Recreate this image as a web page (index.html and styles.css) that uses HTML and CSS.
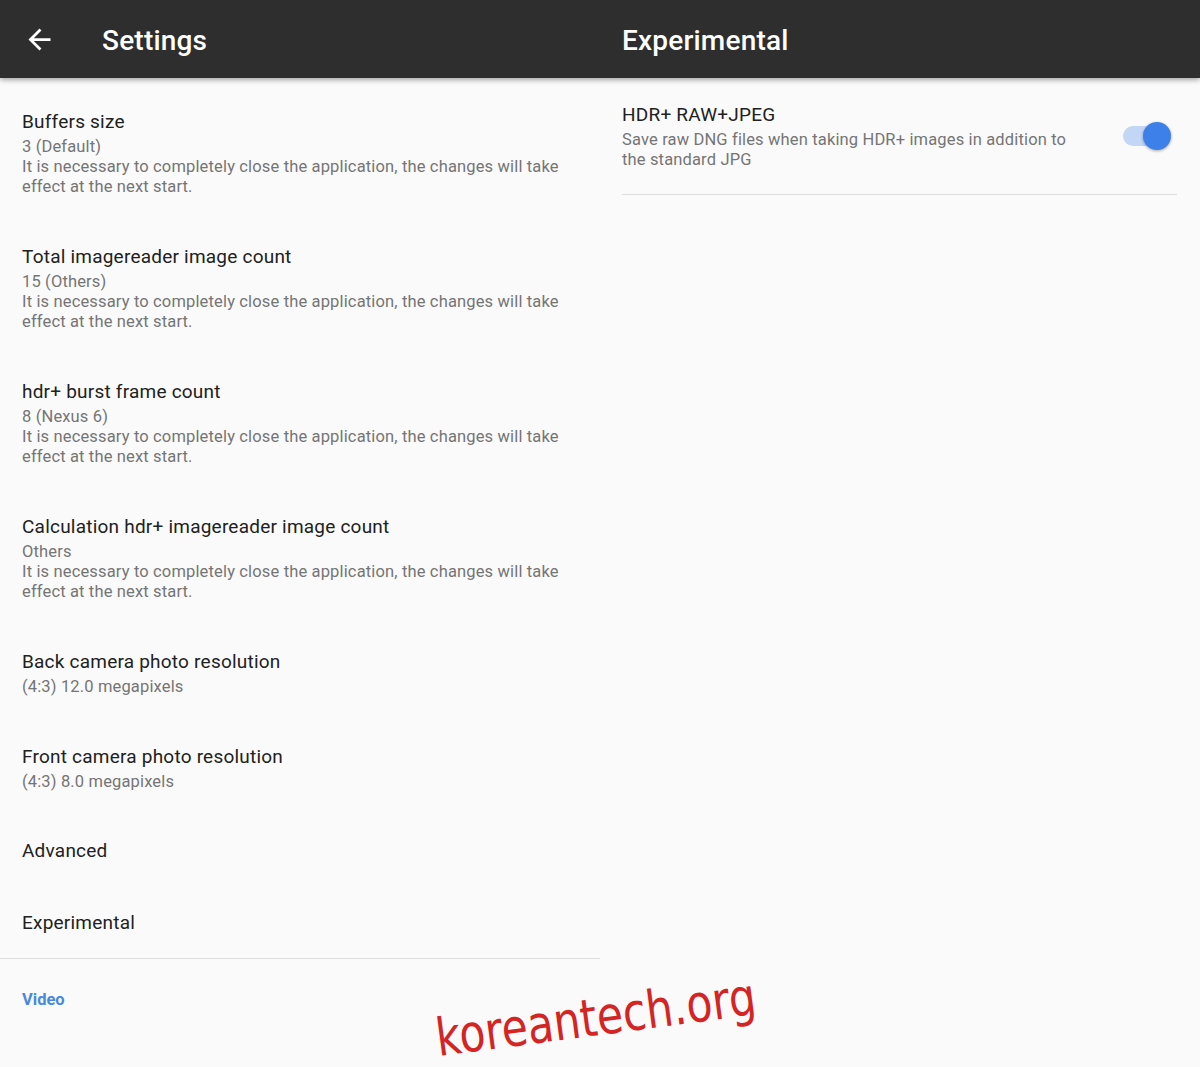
FILE: index.html
```html
<!DOCTYPE html>
<html lang="en">

<head>
    <meta charset="UTF-8">
    <meta name="viewport" content="width=device-width, initial-scale=1.0">
    <title>Settings</title>
    <link rel="stylesheet" href="styles.css">
</head>

<body>
    <!-- Barra superior con los dos títulos -->
    <header class="appbar">
        <div class="appbar-main">
            <span class="back-btn">
                <svg width="33" height="33" viewBox="0 0 24 24">
                    <path d="M20 11H7.83l5.59-5.59L12 4l-8 8 8 8 1.41-1.41L7.83 13H20v-2z" fill="#fff"/>
                </svg>
            </span>
            <h1>Settings</h1>
        </div>
        <div class="appbar-detail">
            <h1>Experimental</h1>
        </div>
    </header>

    <main class="panes">
        <!-- Lista de ajustes -->
        <section class="pane pane-main">
            <div class="pref">
                <div class="pref-title">Buffers size</div>
                <div class="pref-summary">3 (Default)<br>It is necessary to completely close the application, the changes will take effect at the next start.</div>
            </div>
            <div class="pref">
                <div class="pref-title">Total imagereader image count</div>
                <div class="pref-summary">15 (Others)<br>It is necessary to completely close the application, the changes will take effect at the next start.</div>
            </div>
            <div class="pref">
                <div class="pref-title">hdr+ burst frame count</div>
                <div class="pref-summary">8 (Nexus 6)<br>It is necessary to completely close the application, the changes will take effect at the next start.</div>
            </div>
            <div class="pref">
                <div class="pref-title">Calculation hdr+ imagereader image count</div>
                <div class="pref-summary">Others<br>It is necessary to completely close the application, the changes will take effect at the next start.</div>
            </div>
            <div class="pref">
                <div class="pref-title">Back camera photo resolution</div>
                <div class="pref-summary">(4:3) 12.0 megapixels</div>
            </div>
            <div class="pref">
                <div class="pref-title">Front camera photo resolution</div>
                <div class="pref-summary">(4:3) 8.0 megapixels</div>
            </div>
            <div class="pref pref-single">
                <div class="pref-title">Advanced</div>
            </div>
            <div class="pref pref-single pref-end">
                <div class="pref-title">Experimental</div>
            </div>

            <div class="category">Video</div>
        </section>

        <!-- Panel de detalle -->
        <section class="pane pane-detail">
            <div class="pref pref-switch">
                <div class="pref-text">
                    <div class="pref-title">HDR+ RAW+JPEG</div>
                    <div class="pref-summary">Save raw DNG files when taking HDR+ images in addition to the standard JPG</div>
                </div>
                <span class="switch on">
                    <span class="switch-track"></span>
                    <span class="switch-thumb"></span>
                </span>
            </div>
        </section>
    </main>

    <div class="watermark">koreantech.org</div>
</body>

</html>
```

FILE: styles.css
```css
/* Estilos generales */
body {
    font-family: Roboto, 'Noto Sans', sans-serif;
    margin: 0;
    padding: 0;
    background: #fafafa;
    color: #212121;
    width: 1200px;
    height: 1067px;
    overflow: hidden;
    position: relative;
}

/* Barra superior */
.appbar {
    display: flex;
    height: 78px;
    background: #2e2e2e;
    color: #fff;
    box-shadow: 0 2px 5px rgba(0, 0, 0, 0.35);
    position: relative;
    z-index: 2;
}

.appbar h1 {
    margin: 0;
    padding-top: 3px;
    font-size: 28px;
    font-weight: 500;
    letter-spacing: 0.2px;
}

.appbar-main {
    width: 600px;
    display: flex;
    align-items: center;
    padding-left: 23px;
    box-sizing: border-box;
}

.back-btn {
    display: flex;
    width: 33px;
    height: 33px;
    margin-right: 46px;
}

.appbar-detail {
    width: 600px;
    display: flex;
    align-items: center;
    padding-left: 22px;
    box-sizing: border-box;
}

/* Paneles */
.panes {
    display: flex;
}

.pane {
    width: 600px;
    box-sizing: border-box;
}

.pane-main {
    padding-top: 6px;
}

.pane-detail {
    padding: 0 23px 0 22px;
}

/* Preferencias */
.pref {
    padding: 25px 22px 22px 22px;
}

.pref-single {
    padding: 0 22px;
    height: 72px;
    display: flex;
    align-items: center;
}

.pref-end {
    border-bottom: 1px solid #dedede;
}

.pref-title {
    font-size: 19px;
    line-height: 25px;
    letter-spacing: 0.22px;
    color: #212121;
}

.pref-summary {
    margin-top: 3px;
    font-size: 16.5px;
    line-height: 20px;
    letter-spacing: 0.15px;
    color: #757575;
}

.category {
    padding: 31px 22px 0;
    font-size: 16.5px;
    font-weight: 700;
    color: #4a88dc;
}

/* Interruptor */
.pref-switch {
    display: flex;
    align-items: center;
    padding: 24px 6px 24px 0;
    border-bottom: 1px solid #dedede;
}

.pref-text {
    flex: 1;
    padding-right: 40px;
}

.switch {
    position: relative;
    width: 50px;
    height: 28px;
    flex-shrink: 0;
}

.switch-track {
    position: absolute;
    left: 2px;
    top: 4px;
    width: 38px;
    height: 20px;
    border-radius: 10px;
    background: #c3d6f6;
}

.switch-thumb {
    position: absolute;
    right: 0;
    top: 0;
    width: 28px;
    height: 28px;
    border-radius: 50%;
    background: #3d80ea;
    box-shadow: 0 1px 3px rgba(0, 0, 0, 0.35);
}

/* Marca de agua */
.watermark {
    position: absolute;
    left: 440px;
    top: 1008px;
    font-family: 'DejaVu Sans', sans-serif;
    font-size: 52px;
    color: #d42424;
    transform-origin: left bottom;
    transform: rotate(-7.5deg) scaleX(0.82);
    white-space: nowrap;
}
```
